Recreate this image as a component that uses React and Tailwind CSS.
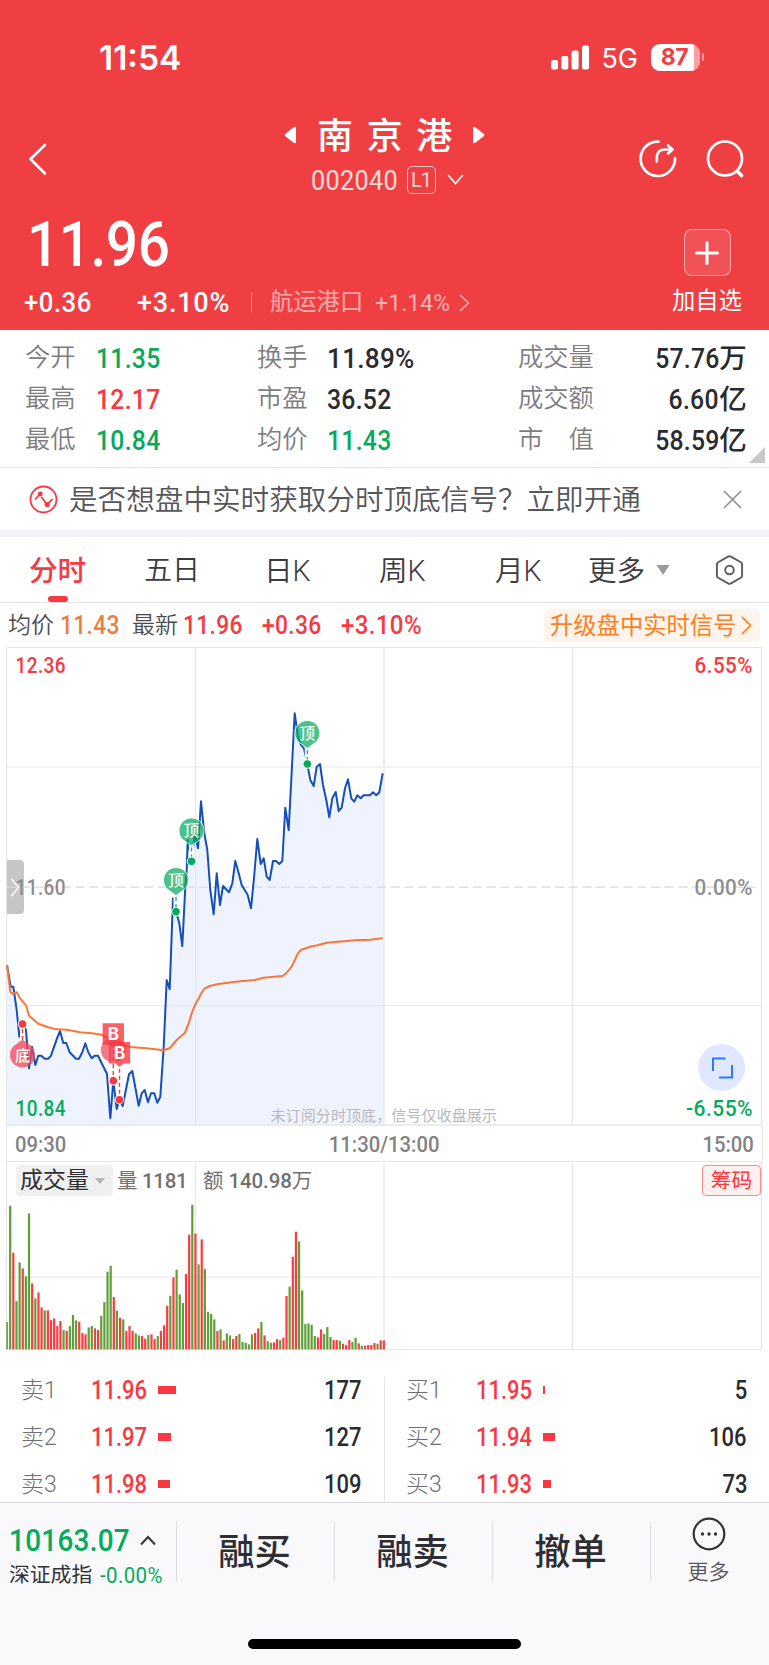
import React from 'react';
import clsx from 'clsx';

const QUOTE_ROWS = [
    [
        { label: '今开', value: '11.35', color: 'text-[#05ab5b]' },
        { label: '换手', value: '11.89%', color: 'text-[#2b2b2f]' },
        { label: '成交量', value: '57.76', unit: '万', color: 'text-[#2b2b2f]' },
    ],
    [
        { label: '最高', value: '12.17', color: 'text-[#f93842]' },
        { label: '市盈', value: '36.52', color: 'text-[#2b2b2f]' },
        { label: '成交额', value: '6.60', unit: '亿', color: 'text-[#2b2b2f]' },
    ],
    [
        { label: '最低', value: '10.84', color: 'text-[#05ab5b]' },
        { label: '均价', value: '11.43', color: 'text-[#05ab5b]' },
        { label: '市　值', value: '58.59', unit: '亿', color: 'text-[#2b2b2f]' },
    ],
];

const SELL = [
    { name: '卖1', price: '11.96', amount: 177, bar: 18 },
    { name: '卖2', price: '11.97', amount: 127, bar: 13 },
    { name: '卖3', price: '11.98', amount: 109, bar: 12 },
];

const BUY = [
    { name: '买1', price: '11.95', amount: 5, bar: 2 },
    { name: '买2', price: '11.94', amount: 106, bar: 12 },
    { name: '买3', price: '11.93', amount: 73, bar: 8 },
];

// 分时价格线
const PRICE_LINE =
    '7,965 10.7,986.7 13.3,986.7 16.7,1010 19.3,1036.7 22.3,1024 26,1030 29,1068.3 32,1046.7 35.3,1065 38.3,1055.7 41.3,1055.7 44.7,1058.7 48,1058.7 51,1055.7 57,1038.3 60,1031 63.3,1043 66.3,1043 69.7,1052.3 76,1058.7 79,1058.7 82.3,1052.3 85.3,1043.3 88.3,1052.3 91.7,1058.3 94.7,1055.7 98,1055.7 107,1074 110.3,1118.3 113.3,1080.7 116.7,1109 119.3,1099.7 122.7,1106 129,1074.3 132.3,1071 138.7,1105.7 141.7,1093.3 144.7,1090 148,1102.3 151,1093.3 154.3,1093.3 157.3,1102.7 160.3,1096.7 163.7,1046.7 166.7,980 169.7,989.3 173,898.3 176,911.7 179.3,923.3 182.3,946 185.3,886.7 186.7,870 187.7,840 191.7,861.3 194.7,833.3 198,848.3 201,801.3 204.3,833.3 207.3,850 210.3,890 213.7,914.3 216.7,873.3 220,905 223,886 229,892.3 232.3,883.3 235.3,861 238.7,873.3 241.7,885 247.7,895 251,908.3 254,878 257.3,839 260.7,864 263.7,858.3 266.7,876.7 269.7,880 273,861 276,861 279.3,864 282.3,861 285.3,807.7 288.7,830 294.7,713.3 298,736.7 301,745 304,748.3 307.3,764 310.3,780 313.7,786 316.7,766.7 320,764 323,785 326.3,800 329.3,817.3 332.3,798.3 335.7,792 338.7,811 341.7,807.7 345,788.3 348,779.3 351.3,798.3 354.3,801.7 357.3,795.3 360.7,798.3 363.7,795.3 370,795.3 373,792.3 376.3,795.3 379.3,792.3 382.7,773.3';

// 均价线
const AVG_LINE =
    '7,965 10.3,992 12.3,993.7 16.7,992.3 20,998.3 26,1005.3 29,1015.7 38.3,1023.7 48.3,1027.3 55,1029 66.7,1029.7 80,1032.3 91.7,1033.3 101.7,1034.7 106.7,1037.3 118,1043 130,1047 146.7,1048.3 163.7,1050.3 170,1048 176.7,1040 185,1032.7 188.7,1023.3 192,1012.3 195.3,1004.3 198.3,999.3 201,993.7 204.3,988.7 210,986 218.3,984 240,981.3 255,980 263.3,977.7 282.7,976 286.7,972.7 291.7,966.7 298,953.3 301,950 310,946.7 317.3,945.3 326.7,942.7 355,940.3 370,939.7 382.7,938.3';

// r 涨 g 跌, 数字为柱高
const VOLUMES =
    'g82 g431 r290 g145 g261 r243 g219 g408 r198 g153 r171 r126 g117 r117 r88 r93 r70 r85 g58 r56 g70 g103 g87 r83 r49 r45 g66 g70 r63 r58 g101 g142 g233 g251 r157 g116 r95 g90 r55 r70 r56 g48 g42 r40 r32 g43 r45 r31 g40 r55 r72 r131 g161 r216 g239 g165 g139 r226 r344 g434 r347 g255 r330 g241 g113 g106 g90 r55 g60 r27 g48 g42 r31 r40 g46 g22 g20 g15 g45 r49 r63 g82 r42 g25 g20 r21 r31 g28 r35 r160 g188 r278 r353 g324 g177 g76 g78 g74 g40 r36 r60 g46 g67 g37 r28 r28 g26 r17 r13 r28 g22 g35 r18 g10 r11 r13 r13 r19 g17 r27 r27'.split(' ');

// 窄体数字
const Num = ({ children, className = 'origin-left scale-x-90' }) => (
    <span className={clsx('inline-block whitespace-nowrap', className)}>{children}</span>
);

const StatusBar = () => (
    <div className="flex h-[114px] items-center justify-between pl-[99px] pr-[65px] font-['Inter','Liberation_Sans',sans-serif]">
        <span className="pt-[3px] text-[33.5px] font-semibold leading-none">11:54</span>
        <div className="flex items-center">
            <svg width="38" height="25" viewBox="0 0 38 25" fill="#fff">
                <rect x="0" y="15" width="7" height="9.5" rx="2" />
                <rect x="10.3" y="11" width="7" height="13.5" rx="2" />
                <rect x="20.6" y="5.5" width="7" height="19" rx="2" />
                <rect x="31" y="0.5" width="7" height="24" rx="2" />
            </svg>
            <span className="ml-[13px] w-[37px] pt-[3px] text-[27px] leading-none tracking-[-0.2px]">5G</span>
            <div className="relative ml-[12px] h-[27px] w-[49px] overflow-hidden rounded-[9px] bg-white/50">
                <div className="flex h-full w-[43px] items-center justify-center bg-white pl-[5px] text-[23px] font-bold leading-none tracking-[-0.5px] text-[#f03f42]">87</div>
            </div>
            <div className="ml-[2px] h-2 w-[2.5px] rounded-r-full bg-white/50" />
        </div>
    </div>
);

const NavBar = () => (
    <div className="grid h-[90px] grid-cols-[200px_1fr_200px] items-center">
        <svg className="ml-7" width="20" height="34" viewBox="0 0 20 34" fill="none" stroke="#fff" strokeWidth="2.6" strokeLinecap="round" strokeLinejoin="round">
            <path d="M17 3 L2.5 17 L17 31.5" />
        </svg>
        <div className="flex flex-col items-center">
            <div className="flex h-[42px] items-center">
                <svg width="13" height="18" viewBox="0 0 13 18" fill="#fff">
                    <path d="M12 2v14q0 2-2 1L1 10q-1-1 0-2l9-7q2-1 2 1z" />
                </svg>
                <span className="ml-5 mr-[6px] pt-[3px] text-[36px] font-medium leading-none tracking-[13.6px]">南京港</span>
                <svg width="13" height="18" viewBox="0 0 13 18" fill="#fff">
                    <path d="M1 2v14q0 2 2 1l9-7q1-1 0-2L3 1q-2-1-2 1z" />
                </svg>
            </div>
            <div className="flex h-[48px] items-center pl-[5px] text-white/80">
                <div className="w-[86px] pt-[2px] text-[28px] leading-none tracking-[0.4px]">
                    <Num>002040</Num>
                </div>
                <span className="ml-[10px] flex h-7 w-[29px] items-center justify-center rounded-[5px] border border-white/70 text-[20px] leading-none tracking-[-1px]">L1</span>
                <svg className="ml-[11px]" width="17" height="12" viewBox="0 0 17 12" fill="none" stroke="#fff" strokeWidth="1.6" strokeLinecap="round">
                    <path d="M1.5 1.5 L8.5 9.5 L15.5 1.5" />
                </svg>
            </div>
        </div>
        <div className="flex justify-end gap-[27px] pr-6">
            <svg width="40" height="40" viewBox="0 0 40 40" fill="none" stroke="#fff" strokeWidth="2.7" strokeLinecap="round" strokeLinejoin="round">
                <path d="M20.5 2.6 A17.2 17.2 0 1 0 37 19" />
                <path d="M18.8 22.5 V19 Q18.8 10.5 27 10.5 H34" />
                <path d="M30 6.5 L34.5 10.5 L30 14.6" />
            </svg>
            <svg width="40" height="40" viewBox="0 0 40 40" fill="none" stroke="#fff" strokeWidth="2.7" strokeLinecap="round">
                <circle cx="20" cy="19.5" r="17" />
                <path strokeWidth="3.6" d="M32.5 32.5 L36.5 36.5" />
            </svg>
        </div>
    </div>
);

const PriceHeader = () => (
    <div className="flex h-[126px] justify-between">
        <div>
            <div className="flex h-[80px] items-center pl-[27px] pt-px text-[63px] font-medium leading-none tracking-[-0.5px]">
                <Num>11.96</Num>
            </div>
            <div className="flex h-[36px] items-center pl-6 pt-[2px] text-[28.5px] font-medium leading-none">
                <span className="w-[113px] tracking-[0.6px]"><Num>+0.36</Num></span>
                <span className="w-[114px] tracking-[0.8px]"><Num className="origin-left scale-x-95">+3.10%</Num></span>
                <span className="h-5 w-px bg-white/45" />
                <span className="ml-[18px] w-[105px] text-[23.3px] font-normal text-white/55">航运港口</span>
                <span className="w-[84px] text-[24px] font-normal tracking-[0.2px] text-white/60"><Num className="origin-left scale-x-95">+1.14%</Num></span>
                <svg width="11" height="18" viewBox="0 0 11 18" fill="none" stroke="#fff" strokeOpacity=".6" strokeWidth="1.6">
                    <path d="M1 1 L9.5 9 L1 17" />
                </svg>
            </div>
        </div>
        <div className="flex w-[124px] flex-col items-center pt-[25px]">
            <div className="flex h-[47px] w-[47px] items-center justify-center rounded-[8px] border border-white/50 bg-white/10">
                <svg width="24" height="24" viewBox="0 0 24 24" stroke="#fff" strokeWidth="3" strokeLinecap="round">
                    <path d="M12 1.5v21M1.5 12h21" />
                </svg>
            </div>
            <span className="mt-[14px] text-[23.3px] leading-none">加自选</span>
        </div>
    </div>
);

const QuoteTable = () => (
    <div className="relative h-[138px] border-b border-[#e6e6e8] pt-[8px]">
        {QUOTE_ROWS.map((row) => (
            <div key={row[0].label} className="flex h-[41px] items-center pl-[25px] pr-[22px] text-[27.5px] font-medium leading-none">
                {row.map((cell, i) => (
                    <React.Fragment key={cell.label}>
                        <span className={clsx('pb-[2px] text-[25.3px] font-[350] text-[#7d7d80]', i === 0 && 'w-[71px]', i === 1 && 'w-[70px]', i === 2 && 'w-[90px]')}>{cell.label}</span>
                        <span className={clsx('tracking-[0.3px]', cell.color, i === 0 && 'w-[161px]', i === 1 && 'w-[191px]', i === 2 && 'flex-1 text-right')}>
                            <Num className={clsx(i === 2 ? 'origin-right' : 'origin-left', cell.value.includes('%') ? 'scale-x-95' : 'scale-x-90')}>{cell.value}</Num>
                            {cell.unit}
                        </span>
                    </React.Fragment>
                ))}
            </div>
        ))}
        <svg className="absolute bottom-[4px] right-[4px]" width="16" height="16" viewBox="0 0 16 16" fill="#c8c8c8">
            <path d="M16 0V16H0z" />
        </svg>
    </div>
);

const SignalBanner = () => (
    <div className="flex h-[62px] items-center pl-[29px] pr-[27px]">
        <svg width="29" height="29" viewBox="0 0 29 29" fill="none" stroke="#f93842" strokeWidth="1.8">
            <circle cx="14.5" cy="14.5" r="13" />
            <circle cx="11.3" cy="9" r="2.4" fill="#f93842" stroke="none" />
            <circle cx="18.2" cy="19.5" r="2.6" fill="#f93842" stroke="none" />
            <path d="M6 14.5 L10 10 M12.5 12 L16.8 18 M19.5 18.2 L23.5 14" />
        </svg>
        <span className="ml-[11px] pt-[3px] text-[28.6px] font-[350] leading-none text-[#55555a]">是否想盘中实时获取分时顶底信号？立即开通</span>
        <svg className="ml-auto" width="19" height="19" viewBox="0 0 19 19" stroke="#8a8a8e" strokeWidth="1.5">
            <path d="M1 1L18 18M18 1L1 18" />
        </svg>
    </div>
);

const PeriodTabs = () => (
    <div className="flex h-[66px] items-center border-b border-[#e2e2e2] pl-[29px] text-[28.6px] leading-none text-[#3b3b3e]">
        <div className="relative flex h-full w-[115px] items-center pt-[3px] font-medium text-[#f93842]">
            分时
            <div className="absolute bottom-0 left-[19px] h-[6px] w-5 rounded-full bg-[#f93842]" />
        </div>
        <div className="w-[120px] pt-[3px] text-[28px] font-[350]">五日</div>
        <div className="w-[115px] pt-[3px] font-[350]">日K</div>
        <div className="w-[116px] pt-[3px] font-[350]">周K</div>
        <div className="w-[93px] pt-[3px] font-[350]">月K</div>
        <div className="flex w-[126px] items-center">
            <span className="pt-[3px] font-[350]">更多</span>
            <svg className="ml-[11px]" width="14" height="10" viewBox="0 0 14 10" fill="#9a9a9a">
                <path d="M0.5 0h13L7 10z" />
            </svg>
        </div>
        <svg width="31" height="32" viewBox="0 0 32 32" fill="none" stroke="#5c5c60" strokeWidth="2" strokeLinejoin="round">
            <path d="M14.5 2.2 q1.5 -.8 3 0 L27.7 8 q1.3 .8 1.3 2.2 V21.8 q0 1.4 -1.3 2.2 L17.5 29.8 q-1.5 .8 -3 0 L4.3 24 Q3 23.2 3 21.8 V10.2 Q3 8.8 4.3 8z" />
            <circle cx="16" cy="16" r="4.4" />
        </svg>
    </div>
);

const ChartInfo = () => (
    <div className="flex h-[44px] items-center pl-2 pr-[9px] text-[25.3px] font-medium leading-none tracking-[0.4px] text-[#f93842]">
        <span className="w-[52px] text-[23px] font-[350] tracking-normal text-[#4c4c50]">均价</span>
        <span className="w-[72px] pt-[2px] text-[#ee7d42]"><Num>11.43</Num></span>
        <span className="w-[51px] text-[23px] font-[350] tracking-normal text-[#4c4c50]">最新</span>
        <span className="w-[79px] pt-[2px]"><Num>11.96</Num></span>
        <span className="w-[79px] pt-[2px]"><Num>+0.36</Num></span>
        <span className="w-[82px] pt-[2px]"><Num className="origin-left scale-x-95">+3.10%</Num></span>
        <div className="ml-auto flex h-[33px] w-[216px] items-center rounded-[5px] bg-[#fff4ec] pl-[6px] text-[23.3px] font-normal tracking-normal text-[#fb7f23]">
            <span className="pt-[3px]">升级盘中实时信号</span>
            <svg className="ml-[5px]" width="11" height="19" viewBox="0 0 11 19" fill="none" stroke="#fb7f23" strokeWidth="1.7">
                <path d="M1 1 L9.5 9.5 L1 18" />
            </svg>
        </div>
    </div>
);

const TopPin = ({ x, y, dotY }) => (
    <g>
        <path d={`M${x} ${y + 12}V${dotY}`} stroke="#fff" strokeWidth="5" />
        <path d={`M${x} ${y + 17}V${dotY}`} stroke="#2bb673" strokeWidth="1.4" strokeDasharray="4 3" />
        <path
            d={`M${x - 6} ${y + 11}L${x} ${y + 15.5}L${x + 6} ${y + 11}A12.5 12.5 0 1 0 ${x - 6} ${y + 11}z`}
            fill="#05ab5b" fillOpacity=".72" stroke="#fff" strokeWidth=".8"
        />
        <text x={x} y={y + 5.6} textAnchor="middle" fontSize="15.5" fontWeight="500" fill="#fff">顶</text>
        <circle cx={x} cy={dotY} r="4.3" fill="#05ab5b" stroke="#fff" />
    </g>
);

const BuyMark = ({ x, y, dotY }) => (
    <g>
        <path d={`M${x} ${y + 11}V${dotY}`} stroke="#fff" strokeWidth="5" />
        <path d={`M${x} ${y + 16}V${dotY}`} stroke="#f93842" strokeWidth="1.4" strokeDasharray="4 3" />
        <path d={`M${x - 10.7} ${y - 10.7}h21.4v21.4h-6.7l-4 3.6l-4 -3.6h-6.7z`} fill="#f93842" fillOpacity=".8" />
        <text x={x} y={y + 6} textAnchor="middle" fontSize="17" fontWeight="700" fill="#fff" fontFamily="Inter">B</text>
        <circle cx={x} cy={dotY} r="4.3" fill="#f93842" stroke="#fff" />
    </g>
);

const PriceChart = () => (
    <div className="relative h-[479px]">
        <svg className="block" width="769" height="479" viewBox="0 647 769 479" fill="none">
            <polygon points={`7,1125 ${PRICE_LINE} 384,773 384,1125`} fill="#eff3fe" />
            <g stroke="#e6e6e6" strokeWidth="1.2">
                <path d="M6.5 647.5H761.5V1126M6.5 647.5V1126M195.5 647V1126M384 647V1126M572.5 647V1126M6.5 767H761.5M6.5 1005.5H761.5" />
                <path d="M6.5 1125H761.5" strokeWidth="1.6" />
            </g>
            <path d="M7 860h13q4 0 4 4v46q0 4-4 4H7z" fill="#c6c6c6" />
            <path d="M11.5 879l7 8.5l-7 8.5" stroke="#fff" strokeWidth="1.5" />
            <path d="M7 887.2H761" stroke="#cfdbe0" strokeWidth="1.3" strokeDasharray="9 4.7" />
            <polyline points={PRICE_LINE} stroke="#154fb8" strokeWidth="2" strokeLinejoin="round" />
            <polyline points={AVG_LINE} stroke="#fb7637" strokeWidth="2" strokeLinejoin="round" />

            <TopPin x={176} y={880} dotY={911.7} />
            <TopPin x={191.5} y={830.5} dotY={861.3} />
            <TopPin x={307.3} y={733} dotY={764} />

            {/* 底部信号 */}
            <path d="M22.5 1042V1024" stroke="#fff" strokeWidth="5" />
            <path d="M22.5 1040V1024" stroke="#f93842" strokeWidth="1.4" strokeDasharray="4 3" />
            <path d="M16.5 1044L22.5 1039.5L28.5 1044A12.5 12.5 0 1 1 16.5 1044z" fill="#f04a5a" fillOpacity=".78" />
            <text x="22.5" y="1060.8" textAnchor="middle" fontSize="15" fontWeight="500" fill="#fff">底</text>
            <circle cx="22.5" cy="1024" r="4.3" fill="#f93842" stroke="#fff" />
            <circle cx="113.3" cy="1050" r="12.5" fill="#f04a5a" fillOpacity=".72" />
            <BuyMark x={113.3} y={1034} dotY={1080.7} />
            <BuyMark x={119.5} y={1052.7} dotY={1099.7} />

            <g fontSize="21.8" fontWeight="500" fontFamily="Roboto" letterSpacing=".5">
                <text x="15.5" y="672.7" textLength="50.5" lengthAdjust="spacingAndGlyphs" fill="#f93842">12.36</text>
                <text x="15.5" y="894.7" textLength="50.5" lengthAdjust="spacingAndGlyphs" fill="#8d8d8d">11.60</text>
                <text x="15.5" y="1116.3" textLength="50.5" lengthAdjust="spacingAndGlyphs" fill="#05ab5b">10.84</text>
                <text x="694.5" y="672.7" textLength="58.5" lengthAdjust="spacingAndGlyphs" fill="#f93842">6.55%</text>
                <text x="694.5" y="894.7" textLength="58.5" lengthAdjust="spacingAndGlyphs" fill="#8d8d8d">0.00%</text>
                <text x="686" y="1116.3" textLength="67" lengthAdjust="spacingAndGlyphs" fill="#05ab5b">-6.55%</text>
            </g>
            <text x="270.5" y="1121.3" fontSize="15.1" fill="#b9b9bb">未订阅分时顶底，信号仅收盘展示</text>
        </svg>
        {/* 全屏按钮 */}
        <div className="absolute bottom-[35px] right-[24px] flex h-[47px] w-[47px] items-center justify-center rounded-full bg-[#dfe8fe]">
            <svg width="24" height="24" viewBox="0 0 24 24" fill="none" stroke="#2b78fb" strokeWidth="2">
                <path d="M3 15V2.5H15.5M9 21.5H22V9" />
            </svg>
        </div>
    </div>
);

const TimeAxis = () => (
    <div className="mx-[6px] flex h-[35px] items-center justify-between border-x border-[#e6e6e6] pl-2 pr-[8px] pt-[2px] text-[22px] font-medium leading-none text-[#828282]">
        <span className="w-[110px]"><Num className="origin-left scale-x-92">09:30</Num></span>
        <Num className="scale-x-92">11:30/13:00</Num>
        <span className="w-[110px] text-right"><Num className="origin-right scale-x-92">15:00</Num></span>
    </div>
);

const VolumeChart = () => (
    <div className="relative h-[189px]">
        <svg className="block" width="769" height="189" viewBox="0 1161 769 189">
            <path d="M6.5 1161.5H761.5V1349.5H6.5zM195.5 1161V1349M384 1161V1349M572.5 1161V1349M6.5 1277H761.5" fill="none" stroke="#e6e6e6" strokeWidth="1.2" />
            {VOLUMES.map((v, i) => {
                const h = Number(v.slice(1)) / 3;
                const x = i === 0 ? 6.3 : 5.95 + i * 3.14;
                return <rect key={i} x={x} y={1349.4 - h} width={i === 0 ? 1.6 : 2.2} height={h} fill={v[0] === 'r' ? '#fd3b3e' : '#5e9f38'} />;
            })}
        </svg>
        <div className="absolute left-4 right-[8px] top-[4px] flex h-[31px] items-center text-[20.5px] leading-none text-[#707070]">
            <div className="flex h-full w-[97px] items-center rounded-[4px] bg-[#f0f0f0] pl-[4px] text-[23px] text-[#2f2f2f]">
                成交量
                <svg className="ml-[6px]" width="10" height="6" viewBox="0 0 10 6" fill="#b5b5b5">
                    <path d="M0 0h10L5 6z" />
                </svg>
            </div>
            <span className="ml-[4px] w-[86px] pt-px tracking-[-0.3px]">量 <span className="font-medium">1181</span></span>
            <span className="pt-px tracking-[-0.1px]">额 <span className="font-medium">140.98</span>万</span>
            <div className="ml-auto flex h-full w-[59px] items-center justify-center rounded-[4px] border border-[#fb8b8d] bg-[#fff0f0] pt-px text-[20.8px] text-[#fb363c]">筹码</div>
        </div>
    </div>
);

const OrderColumn = ({ rows, className }) => (
    <div className={clsx('pl-[21px] pr-[22px]', className)}>
        {rows.map((row) => (
            <div key={row.name} className="flex h-[47px] items-center text-[25px] leading-none">
                <span className="w-[70px] pt-[2px] text-[23px] font-light text-[#6f6f73]">{row.name}</span>
                <span className="w-[67px] pt-[2px] font-medium text-[#f93842]"><Num className="origin-left scale-x-88">{row.price}</Num></span>
                <div className="h-2 bg-[#f93842]" style={{ width: row.bar }} />
                <span className="ml-auto pt-[2px] font-medium text-[#2b2b2f]"><Num className="origin-right scale-x-88">{row.amount}</Num></span>
            </div>
        ))}
    </div>
);

const OrderBook = () => (
    <div className="flex h-[152px] pt-4">
        <OrderColumn rows={SELL} className="w-[384px]" />
        <div className="mt-[11px] w-px bg-[#e6e6e8]" />
        <OrderColumn rows={BUY} className="flex-1" />
    </div>
);

const BottomBar = () => (
    <div className="flex h-[163px] flex-col items-center border-t border-[#d8d8de] bg-[#f9f9fc]">
        <div className="flex h-[97px] w-full items-center">
            <div className="flex w-[176px] flex-col pl-[9px] pt-[8px]">
                <div className="flex items-center text-[31px] font-medium leading-none tracking-[0.3px] text-[#05ab5b]">
                    <div className="w-[122px]"><Num>10163.07</Num></div>
                    <svg className="ml-[9px]" width="16" height="11" viewBox="0 0 16 11" fill="none" stroke="#333" strokeWidth="2">
                        <path d="M1 9.5 L8 2 L15 9.5" />
                    </svg>
                </div>
                <div className="mt-[9px] flex items-center whitespace-nowrap text-[20.8px] leading-none text-[#333]">
                    深证成指
                    <Num className="ml-[8px] origin-left scale-x-93 text-[22px] tracking-[0.4px] text-[#05ab5b]">-0.00%</Num>
                </div>
            </div>
            {['融买', '融卖', '撤单'].map((name) => (
                <div key={name} className="flex h-[59px] w-[158px] items-center justify-center border-l border-[#dcdce0] pr-[2px] pt-[4px] text-[36.3px] font-medium leading-none text-[#2f2f33]">{name}</div>
            ))}
            <div className="flex h-[59px] flex-1 flex-col items-center justify-center border-l border-[#dcdce0] pb-[3px] pr-[3px]">
                <svg className="shrink-0" width="34" height="34" viewBox="0 0 34 34" fill="none" stroke="#333" strokeWidth="2.2">
                    <circle cx="17" cy="17" r="15.3" />
                    <g fill="#333" stroke="none">
                        <circle cx="10.5" cy="17" r="1.7" />
                        <circle cx="17" cy="17" r="1.7" />
                        <circle cx="23.5" cy="17" r="1.7" />
                    </g>
                </svg>
                <span className="mt-[11px] text-[21px] font-[350] leading-none text-[#55555a]">更多</span>
            </div>
        </div>
        {/* home indicator */}
        <div className="mt-[39px] h-[10px] w-[273px] rounded-full bg-black" />
    </div>
);

const App = () => (
    <div className="w-[769px] overflow-hidden bg-white font-['Roboto','Noto_Sans_CJK_SC',sans-serif]">
        <div className="bg-[#f03f42] text-white">
            <StatusBar />
            <NavBar />
            <PriceHeader />
        </div>
        <QuoteTable />
        <SignalBanner />
        <div className="h-[7px] bg-[#f2f3f8]" />
        <PeriodTabs />
        <ChartInfo />
        <PriceChart />
        <TimeAxis />
        <VolumeChart />
        <OrderBook />
        <BottomBar />
    </div>
);

export default App;
